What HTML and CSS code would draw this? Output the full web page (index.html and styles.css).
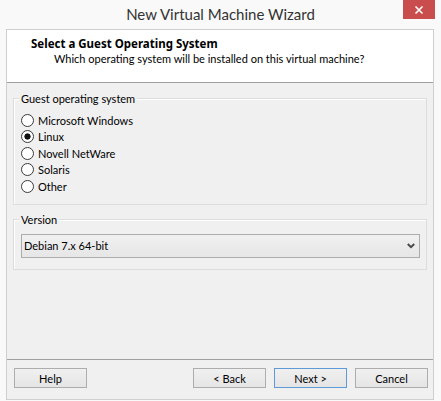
FILE: index.html
```html
<!DOCTYPE html>
<html lang="en">
<head>
    <meta charset="UTF-8">
    <title>New Virtual Machine Wizard</title>
    <link rel="stylesheet" href="styles.css">
</head>
<body>
    <div class="window">
        <div class="titlebar">
            <span class="title">New Virtual Machine Wizard</span>
            <div class="close">
                <svg width="10" height="10" viewBox="0 0 10 10">
                    <path d="M1.5 1.5 L8.5 8.5 M8.5 1.5 L1.5 8.5" stroke="#fff" stroke-width="1.6" fill="none"/>
                </svg>
            </div>
        </div>

        <div class="client">
            <div class="header">
                <div class="h-title">Select a Guest Operating System</div>
                <div class="h-sub">Which operating system will be installed on this virtual machine?</div>
            </div>

            <div class="content">
                <div class="group group-os">
                    <div class="group-label">Guest operating system</div>
                    <div class="radios">
                        <label class="radio"><input type="radio" name="os"> Microsoft Windows</label>
                        <label class="radio"><input type="radio" name="os" checked> Linux</label>
                        <label class="radio"><input type="radio" name="os"> Novell NetWare</label>
                        <label class="radio"><input type="radio" name="os"> Solaris</label>
                        <label class="radio"><input type="radio" name="os"> Other</label>
                    </div>
                </div>

                <div class="group group-version">
                    <div class="group-label">Version</div>
                    <div class="combo">
                        <span>Debian 7.x 64-bit</span>
                        <svg width="8" height="6" viewBox="0 0 8 6">
                            <path d="M0.8 1 L4 4.2 L7.2 1" stroke="#4a4a4a" stroke-width="2" fill="none"/>
                        </svg>
                    </div>
                </div>
            </div>

            <div class="footer">
                <button class="btn">Help</button>
                <div class="spacer"></div>
                <button class="btn">&lt; Back</button>
                <button class="btn btn-default">Next &gt;</button>
                <button class="btn">Cancel</button>
            </div>
        </div>
    </div>
</body>
</html>
```

FILE: styles.css
```css
body { margin: 0; font-family: Lato, "Liberation Sans", sans-serif; font-size: 11px; color: #000; }

.window {
    width: 441px;
    height: 401px;
    background: #f9f9f9;
    display: flex;
    flex-direction: column;
}

.titlebar {
    position: relative;
    height: 29px;
    text-align: center;
}
.title {
    display: inline-block;
    font-size: 15px;
    line-height: 20px;
    padding-top: 4px;
    color: #333;
}
.close {
    position: absolute;
    top: 0;
    right: 6px;
    width: 32px;
    height: 19px;
    background: #c94d4d;
    display: flex;
    align-items: center;
    justify-content: center;
}

.client {
    margin-left: 6px;
    width: 426px;
    height: 369px;
    border: 1px solid #cfcfcf;
    background: #f0f0f0;
    display: flex;
    flex-direction: column;
}

.header {
    background: #fff;
    border-bottom: 1px solid #a0a0a0;
    padding-top: 6px;
    box-sizing: border-box;
    height: 53px;
    line-height: 15px;
}
.h-title {
    font-family: "Noto Sans", "Open Sans", sans-serif;
    font-size: 11.5px;
    font-weight: bold;
    padding-left: 24px;
}
.h-sub { padding-left: 47px; }

.content {
    flex: 1;
    padding: 0 6px;
    line-height: 15px;
}

.group {
    border: 1px solid #dcdcdc;
    box-shadow: inset 1px 1px 0 #fff;
    padding: 0 0 9px 0;
}
.group-os { margin-top: 15px; }
.group-version { margin-top: 14px; padding-bottom: 11px; }
.group-label {
    width: fit-content;
    background: #f0f0f0;
    line-height: 15px;
    padding: 0 2px;
    margin: -8px 0 0 5px;
}

.radios { margin-top: 6px; padding-left: 7px; }
.radio {
    display: flex;
    align-items: center;
    height: 16.5px;
    gap: 4px;
}
.radio input {
    appearance: none;
    margin: 0;
    width: 13px;
    height: 13px;
    border: 1px solid #3a3a3a;
    border-radius: 50%;
    background: #fff;
    box-sizing: border-box;
}
.radio input:checked {
    background: radial-gradient(circle, #111 0 2.8px, #fff 3.4px);
}

.combo {
    margin: 7px 6px 0 7px;
    height: 24px;
    box-sizing: border-box;
    border: 1px solid #acacac;
    background: linear-gradient(#f0f0f0, #e6e6e6);
    display: flex;
    align-items: center;
    justify-content: space-between;
    padding: 0 4px 0 2px;
}

.footer {
    border-top: 1px solid #a0a0a0;
    height: 40px;
    box-sizing: border-box;
    padding: 8px 5px 0 7px;
    display: flex;
    align-items: flex-start;
    gap: 8px;
}
.spacer { flex: 1; }
.btn {
    width: 73px;
    height: 20px;
    font-family: inherit;
    font-size: 11px;
    padding: 0;
    border: 1px solid #adadad;
    background: linear-gradient(#f0f0f0, #e5e5e5);
    color: #000;
}
.btn-default { border-color: #5f9ad8; }
```
